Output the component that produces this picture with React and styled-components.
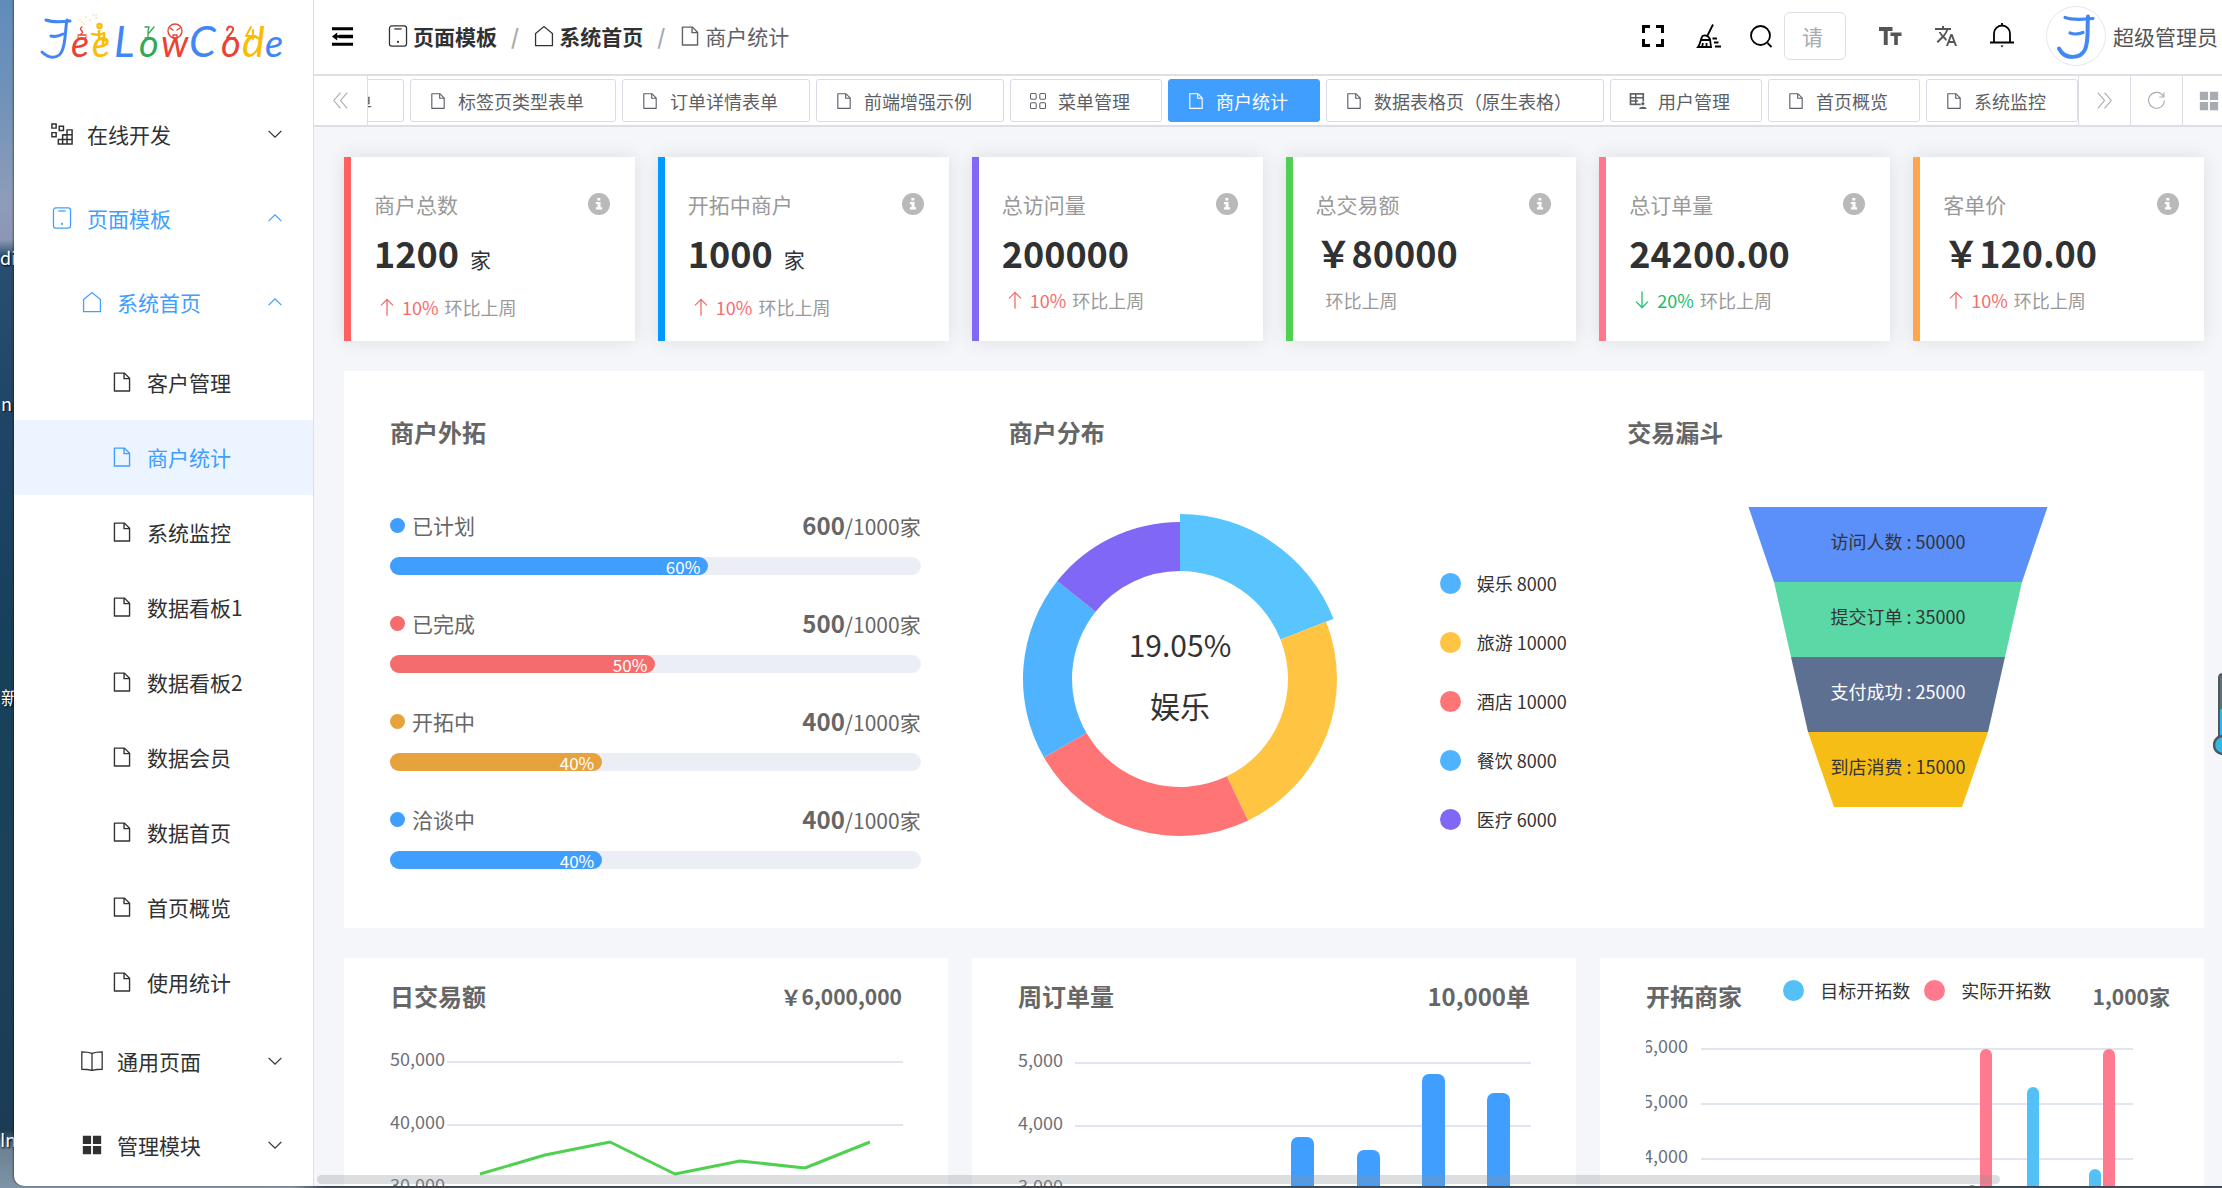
import React from "react";
import styled, { createGlobalStyle } from "styled-components";

const GlobalStyle = createGlobalStyle`
  *, *::before, *::after { box-sizing: border-box; }
  body { margin: 0; overflow: hidden; }
  body, button, input {
    font-family: "Noto Sans CJK SC", "Noto Sans", sans-serif;
    color: #333;
  }
  button { margin: 0; padding: 0; border: 0; background: none; cursor: pointer; }
  a { color: inherit; text-decoration: none; }
  h2, p, ul, ol, dl, dd { margin: 0; padding: 0; list-style: none; }
  svg { display: block; flex: none; }
`;

/* ---------- icons ---------- */

const Svg = ({ size = 22, children, width = 1.4, ...rest }) => (
  <svg width={size} height={size} viewBox="0 0 24 24" fill="none" stroke="currentColor" strokeWidth={width} aria-hidden="true" {...rest}>
    {children}
  </svg>
);

const icons = {
  doc: (
    <path
      d="M832 384H576V128H192v768h640zm-26.496-64L640 154.496V320zM160 64h480l256 256v608a32 32 0 0 1-32 32H160a32 32 0 0 1-32-32V96a32 32 0 0 1 32-32"
      transform="scale(0.0234375)"
      fill="currentColor"
      stroke="none"
    />
  ),
  phone: (
    <g>
      <rect x="2.7" y="1" width="18.6" height="22" rx="2.5" />
      <path d="M8 4.3h8" />
      <circle cx="12" cy="18.5" r="1.2" fill="currentColor" stroke="none" />
    </g>
  ),
  house: <path d="M2.8 22.4V9.2L12 1.6l9.2 7.6v13.2z" />,
  book: <path d="M12 3.6C8 2.2 4 2 .9 2v19c4 0 7 .2 11.1 1.2M12 3.6C16 2.2 20 2 23.1 2v19c-4 0-7 .2-11.1 1.2zV22.2" />,
  blocks: (
    <g fill="currentColor" stroke="none">
      <path d="M2 2h9v9H2zM13 2h9v9h-9zM2 13h9v9H2zM13 13h9v9h-9z" />
    </g>
  ),
  outlineBlocks: (
    <g>
      <rect x="2" y="2" width="7.6" height="7.6" rx="1.5" />
      <rect x="14.4" y="2" width="7.6" height="7.6" rx="1.5" />
      <rect x="2" y="14.4" width="7.6" height="7.6" rx="1.5" />
      <rect x="14.4" y="14.4" width="7.6" height="7.6" rx="1.5" />
    </g>
  ),
  grid: (
    <path
      strokeWidth="1.6"
      d="M1 1h4.6v4.6H1zM9 3.5h4.6v4.6H9zM1 10.5h4.6v4.6H1zM17.5 7.5h5.5V23H8v-5h4.7v-5h4.8zM17.5 12.7V23M12.7 18v5M12.7 12.7H23M12.7 18H23"
    />
  ),
  userTable: (
    <g>
      <rect x="2" y="2.5" width="17" height="14" strokeWidth="2.2" />
      <path d="M2 7.5h17M9 2.5v14M2 12h10" strokeWidth="2" />
      <circle cx="18.5" cy="15.5" r="2.6" fill="currentColor" stroke="#fff" strokeWidth="1" />
      <path d="M13.5 22.5c0-4 10-4 10 0z" fill="currentColor" stroke="none" />
    </g>
  ),
  down: <path d="M3.5 7.8 12 16.2l8.5-8.4" />,
  up: <path d="M3.5 16.2 12 7.8l8.5 8.4" />,
  collapse: (
    <g fill="currentColor" stroke="none">
      <path d="M1 2.4h22v3.2H1zM1 18.4h22v3.2H1zM8.5 10.3H23v3.4H8.5zM1 12l5.5-4.2v3h3v2.4h-3v3z" />
    </g>
  ),
  full: <path strokeWidth="3" d="M9 2.5H2.5V9M15 2.5h6.5V9M9 21.5H2.5V15M15 21.5h6.5V15" />,
  broom: (
    <g strokeWidth="1.8">
      <path d="M16 .5 10 12.5M5.5 12c3-1.500 6 0 7.5 3L14 23H1c2.5-3 2.5-8 4.5-11zM3.5 16h9.5M5 23l1-4M9.5 23v-4" />
      <path d="M15.5 14.5h4.5M17 18.5h4.5M18 22.5h6" />
    </g>
  ),
  search: (
    <g strokeWidth="1.8">
      <circle cx="11.5" cy="11.5" r="9.5" />
      <path d="m18.5 19 4 4" />
    </g>
  ),
  textSize: (
    <g fill="currentColor" stroke="none">
      <path d="M1 3h13.5v4H9.7v14H5.8V7H1z" />
      <path d="M12.5 8.5H23.5v3.4h-3.7V21h-3.6v-9.1h-3.7z" />
    </g>
  ),
  translate: (
    <path
      fill="currentColor"
      stroke="none"
      d="m12.870 15.070-2.540-2.510.030-.030A17.520 17.520 0 0 0 14.070 6H17V4h-7V2H8v2H1v2h11.170C11.500 7.920 10.440 9.750 9 11.350 8.070 10.320 7.300 9.190 6.690 8h-2c.730 1.630 1.730 3.170 2.980 4.560l-5.090 5.020L4 19l5-5 3.110 3.110zM18.500 10h-2L12 22h2l1.120-3h4.750L21 22h2zm-2.620 7 1.620-4.330L19.120 17z"
    />
  ),
  bell: (
    <g strokeWidth="1.8">
      <path d="M4 18.500V9.500a8 8 0 0 1 16 0v9M0 18.500h24M12 1.800V-1" />
      <path d="M10.500 21.500h3L12 23.500z" fill="currentColor" stroke="none" />
    </g>
  ),
  prev: <path d="M12 2 3.5 12 12 22M20.5 2 12 12l8.5 10" />,
  next: <path d="m12 2 8.5 10L12 22M3.5 2 12 12 3.5 22" />,
  reload: <path d="M20.5 6.5A10 10 0 1 0 22 12M21.5 1.5v6h-6" />,
  arrowUp: <path d="M12 23.5V2M4 9.8 12 1.8l8 8" />,
  arrowDown: <path d="M12 .5V22M4 14.2l8 8 8-8" />,
};

const Icon = ({ name, size, width }) => (
  <Svg size={size} width={width}>
    {icons[name]}
  </Svg>
);

const InfoIcon = () => (
  <svg width="22" height="22" viewBox="0 0 22 22" aria-hidden="true">
    <circle cx="11" cy="11" r="11" fill="#b9b9b9" />
    <path d="M9.3 5h3v2.6h-3zM7.900 9h4.6v5.2h1.6v2.2H7.900v-2.2h1.7v-3H7.900z" fill="#fff" />
  </svg>
);

const Logo = () => (
  <svg width="250" height="76" viewBox="38 0 250 76" role="img" aria-label="JeeLowCode">
    <g fill="none" strokeLinecap="round" strokeLinejoin="round">
      <path stroke="#4285f4" strokeWidth="3" d="M46 20c8 3 16 2 24 1M67 20c-2 10-1 22-5 31-3 7-12 9-20 1M51 36c4 1 8 0 12-2" />
      <g stroke="#ea4335" strokeWidth="1.4">
        <path d="M82 27c-5 3 4 4-1 7M78 35h8M78 37l1 2h6l1-2" />
        <circle cx="175" cy="31" r="7" />
        <path d="m170 28 3 2m7-2-3 2M173 35h4v3h-4z" />
        <path d="M227 30c1-5 7-4 6 0-1 3-4 5-6 8h8" strokeWidth="2" />
      </g>
      <g stroke="#34a853" strokeWidth="1.3">
        <path d="M145 27h4l-1 4v7m6-11-5 6M145 38h6" />
      </g>
      <g stroke="#fbbc05" strokeWidth="2.4">
        <circle cx="99.5" cy="26" r="2" />
        <path d="M99 31v8h4v6M92 34l7 1 5-2M104 33v8" />
        <path d="M251 27l-5 9h9M253 30v9" strokeWidth="2" />
        <path d="M80 20h.1M84 24h.1M86 17h.1M90 20h.1M93 15h.1M96 18h.1M82 22h.1M96 15h.1" strokeWidth="1.2" />
      </g>
    </g>
    <g fontFamily="Lato, sans-serif" fontStyle="italic" fontSize="38">
      <text x="71" y="57" fill="#ea4335">e</text>
      <text x="92" y="57" fill="#fbbc05">e</text>
      <text x="114" y="57" fill="#4285f4" fontSize="43">L</text>
      <text x="139" y="57" fill="#34a853">o</text>
      <text x="161" y="57" fill="#ea4335">w</text>
      <text x="189" y="57" fill="#4285f4" fontSize="43">C</text>
      <text x="221" y="57" fill="#ea4335">o</text>
      <text x="242" y="57" fill="#fbbc05" fontSize="43">d</text>
      <text x="265" y="57" fill="#4285f4">e</text>
    </g>
  </svg>
);

/* ---------- frame ---------- */

const Desktop = styled.div`
  display: flex;
  height: 100vh;
  padding: 0 0 2px 14px;
  position: relative;
  overflow: hidden;
  background:
    linear-gradient(90deg, #7f93a6 0, #8498a8 280px, #454f59 310px, #454f59 100%) 14px 100% / 100% 2px no-repeat,
    linear-gradient(180deg, #5f8cbb 0, #7393b9 110px, #8e9cba 200px, #8b97b3 240px, #2a4e70 256px, #1f4566 420px, #17405c 640px, #1b4259 900px, #1b3c55 1130px, #6d8296 1150px, #7f93a6 100%);
`;

const DesktopLabel = styled.span`
  position: absolute;
  left: ${(p) => p.$left}px;
  top: ${(p) => p.$top}px;
  color: #fff;
  font-size: 18px;
  line-height: 24px;
  white-space: nowrap;
  text-shadow: 1px 1px 2px #000;
`;

const Window = styled.div`
  flex: 1;
  min-width: 0;
  display: flex;
  position: relative;
  z-index: 1;
  overflow: hidden;
  background: #fff;
  border-bottom-left-radius: 10px;
  box-shadow: -1px 0 2px rgba(0, 0, 0, 0.4);
`;

/* ---------- sidebar ---------- */

const Sidebar = styled.aside`
  flex: none;
  width: 300px;
  border-right: 1px solid #dcdfe6;
`;

const Brand = styled.a`
  display: block;
  height: 93px;
  padding-left: 24px;
`;

const menuRow = `
  display: flex;
  align-items: center;
  width: 100%;
  font-size: 21px;
  text-align: left;
`;

const MenuGroup = styled.button`
  ${menuRow}
  height: 84px;
  padding: 0 29px 2px ${(p) => p.$level * 30}px;
  color: ${(p) => (p.$open ? "#409eff" : "#303133")};
`;

const MenuLink = styled.a`
  ${menuRow}
  height: 75px;
  padding: 0 0 2px 90px;
  color: ${(p) => (p.$active ? "#409eff" : "#303133")};
  background: ${(p) => (p.$active ? "#ebf4ff" : "none")};
`;

const MenuIcon = styled.span`
  display: flex;
  justify-content: center;
  width: 36px;
  margin-right: 7px;
`;

const MenuText = styled.span`
  flex: 1;
`;

const Group = ({ icon, level, open, children }) => (
  <MenuGroup type="button" $level={level} $open={open} aria-expanded={!!open}>
    <MenuIcon>
      <Icon name={icon} />
    </MenuIcon>
    <MenuText>{children}</MenuText>
    <Icon name={open ? "up" : "down"} size={18} width={1.7} />
  </MenuGroup>
);

const pages = ["客户管理", "商户统计", "系统监控", "数据看板1", "数据看板2", "数据会员", "数据首页", "首页概览", "使用统计"];

/* ---------- header ---------- */

const Main = styled.div`
  flex: 1;
  min-width: 0;
  margin-right: -12px;
  display: flex;
  flex-direction: column;
`;

const Header = styled.header`
  flex: none;
  display: flex;
  align-items: center;
  height: 76px;
  padding: 0 16px 2px 17px;
  border-bottom: 2px solid #dcdfe6;
`;

const Crumbs = styled.ol`
  display: flex;
  align-items: center;
  margin-left: 33px;
  font-size: 21px;
  line-height: 30px;
`;

const Crumb = styled.li`
  display: flex;
  align-items: center;
  color: ${(p) => (p.$current ? "#606266" : "#303133")};
  font-weight: ${(p) => (p.$current ? 400 : 700)};

  &:not(:first-child)::before {
    content: "/";
    margin: 0 14px;
    color: #a8abb2;
    font-weight: 700;
  }
`;

const CrumbLink = styled.a`
  display: flex;
  align-items: center;
  gap: 4px;
`;

const Tools = styled.div`
  flex: 1;
  display: flex;
  align-items: center;
  justify-content: flex-end;
  gap: 32px;
`;

const ToolPair = styled.div`
  display: flex;
  align-items: center;
  gap: 28px;
`;

const IconButton = styled.button`
  display: flex;
  color: ${(p) => (p.$muted ? "#555" : "#000")};

  svg {
    overflow: visible;
  }
`;

const SearchField = styled.label`
  display: flex;
  align-items: center;
  gap: 11px;
  color: #000;
`;

const SearchInput = styled.input`
  width: 62px;
  height: 48px;
  padding: 0 17px;
  border: 1px solid #dcdfe6;
  border-radius: 6px;
  background: #fff;
  font-size: 21px;
  outline: none;

  &::placeholder {
    color: #a8abb2;
  }
`;

const User = styled.button`
  display: flex;
  align-items: center;
  gap: 7px;
  color: #555;
  font-size: 21px;
  white-space: nowrap;
`;

const Avatar = () => (
  <svg width="60" height="60" viewBox="0 0 60 60" aria-hidden="true">
    <circle cx="30" cy="30" r="29.5" fill="#fff" stroke="#e6e6e6" />
    <g fill="none" stroke="#4189f2" strokeLinecap="round" strokeLinejoin="round">
      <path strokeWidth="3.2" d="M19 11.500c8 3 18 2 28 1M24 27c4 1.500 9 1 13-.5" />
      <path strokeWidth="4" d="M42 10.500c-1 12 1 24-3 33-4 9-20 11-26-1" />
    </g>
  </svg>
);

/* ---------- page tabs ---------- */

const TabBar = styled.nav`
  flex: none;
  display: flex;
  height: 51px;
  border-bottom: 2px solid #dcdfe6;
  background: #fff;
`;

const TabScroll = styled.div`
  flex: 1;
  min-width: 0;
  display: flex;
  justify-content: flex-end;
  align-items: center;
  gap: 6px;
  overflow: hidden;
`;

const Tab = styled.a`
  flex: none;
  display: flex;
  align-items: center;
  gap: 11px;
  height: 43px;
  padding: 0 31px 0 18px;
  border: 1px solid ${(p) => (p.$active ? "#409eff" : "#d8dce5")};
  border-radius: 3px;
  background: ${(p) => (p.$active ? "#409eff" : "#fff")};
  color: ${(p) => (p.$active ? "#fff" : "#5c5f66")};
  font-size: 18px;
  line-height: 26px;
  white-space: nowrap;
`;

const TabControl = styled.button`
  flex: none;
  display: flex;
  align-items: center;
  justify-content: center;
  width: ${(p) => (p.$start ? 54 : 52)}px;
  border: solid #dcdfe6;
  border-width: ${(p) => (p.$start ? "0 1px 0 0" : "0 0 0 1px")};
  color: #a8abb2;
`;

const tabs = [
  ["doc", "详情表单"],
  ["doc", "标签页类型表单"],
  ["doc", "订单详情表单"],
  ["doc", "前端增强示例"],
  ["outlineBlocks", "菜单管理"],
  ["doc", "商户统计"],
  ["doc", "数据表格页（原生表格）"],
  ["userTable", "用户管理"],
  ["doc", "首页概览"],
  ["doc", "系统监控"],
];

/* ---------- content ---------- */

const Content = styled.main`
  flex: 1;
  min-height: 0;
  display: flex;
  flex-direction: column;
  gap: 30px;
  padding: 30px 30px 0;
  overflow: hidden;
  background: #f5f6f9;
`;

const Cards = styled.section`
  flex: none;
  display: grid;
  grid-template-columns: repeat(6, minmax(0, 1fr));
  gap: 23px;
`;

const Card = styled.article`
  height: 184px;
  padding: 31px 25px 0 23px;
  border-left: 7px solid ${(p) => p.$color};
  background: #fff;
  box-shadow: 0 0 18px rgba(0, 0, 0, 0.1);
`;

const CardHead = styled.div`
  display: flex;
  align-items: center;
  justify-content: space-between;
  color: #999;
  font-size: 21px;
  line-height: 32px;
`;

const Value = styled.p`
  display: flex;
  align-items: baseline;
  gap: 11px;
  color: #303133;
  font-size: 36px;
  font-weight: 700;
  line-height: 65px;
`;

const Unit = styled.span`
  font-size: 21px;
  font-weight: 400;
`;

const Trend = styled.p`
  display: flex;
  align-items: center;
  padding-left: 4px;
  color: ${(p) => p.$color};
  font-size: 18px;
  line-height: 30px;
`;

const TrendText = styled.span`
  margin-left: 6px;
`;

const Period = styled(TrendText)`
  color: #999;
`;

const Panel = styled.section`
  flex: none;
  background: #fff;
`;

const Overview = styled(Panel)`
  display: grid;
  grid-template-columns: repeat(3, minmax(0, 1fr));
  height: 557px;
  padding: 0 2px;
`;

const Column = styled.div`
  min-width: 0;
  padding: 44px 44px 0;
`;

const Title = styled.h2`
  color: #666;
  font-size: 24px;
  font-weight: 700;
  line-height: 34px;
  white-space: nowrap;
`;

const ProgressList = styled.ul`
  display: grid;
  gap: 30px;
  padding-top: 58px;
`;

const ProgressHead = styled.div`
  display: flex;
  align-items: center;
  gap: 7px;
  height: 36px;
  margin-bottom: 14px;
  color: #666;
  font-size: 21px;
  line-height: 36px;
`;

const Dot = styled.span`
  flex: none;
  width: ${(p) => p.$size}px;
  height: ${(p) => p.$size}px;
  border-radius: 50%;
  background: ${(p) => p.$color};
`;

const Amount = styled.span`
  margin-left: auto;
`;

const AmountStrong = styled.strong`
  font-size: 24px;
`;

const Track = styled.div`
  height: 18px;
  border-radius: 9px;
  background: #ebeef5;
`;

const Fill = styled.div`
  height: 18px;
  padding-right: 8px;
  border-radius: 9px;
  background: ${(p) => p.$color};
  color: #fff;
  font-size: 17px;
  line-height: 20px;
  text-align: right;
`;

const DonutRow = styled.div`
  display: flex;
  align-items: center;
  gap: 95px;
  padding: 65px 0 0 6px;
`;

const Legend = styled.ul`
  display: flex;
  flex-direction: ${(p) => (p.$row ? "row" : "column")};
  gap: ${(p) => (p.$row ? 14 : 32)}px;
  margin-top: ${(p) => (p.$row ? 0 : 44)}px;
  padding-bottom: ${(p) => (p.$row ? 10 : 0)}px;
`;

const LegendItem = styled.li`
  display: flex;
  align-items: center;
  gap: 16px;
  font-size: 18px;
  line-height: 27px;
  white-space: nowrap;
`;

const FunnelBox = styled.div`
  display: flex;
  justify-content: center;
  padding: 58px 0 0 11px;
`;

const Charts = styled.div`
  flex: none;
  display: grid;
  grid-template-columns: repeat(3, minmax(0, 1fr));
  gap: 24px;
`;

const ChartPanel = styled(Panel)`
  height: 400px;
  padding: 20px ${(p) => (p.$wide ? 34 : 46)}px 0 46px;
`;

const ChartHead = styled.div`
  display: flex;
  align-items: center;
  justify-content: space-between;
  height: 35px;
`;

const Total = styled.strong`
  color: #666;
  font-size: ${(p) => p.$size}px;
  white-space: nowrap;
`;

const ScrollThumb = styled.div`
  position: absolute;
  left: 303px;
  right: 222px;
  bottom: 2px;
  height: 9px;
  border-radius: 5px;
  background: rgba(144, 147, 153, 0.3);
`;

const Thermometer = styled.div`
  position: absolute;
  right: 0;
  top: 672px;
`;

/* ---------- data ---------- */

const cards = [
  { color: "#ff6060", name: "商户总数", value: "1200", unit: "家", dir: "up", rate: "10%" },
  { color: "#0099ff", name: "开拓中商户", value: "1000", unit: "家", dir: "up", rate: "10%" },
  { color: "#8067f6", name: "总访问量", value: "200000", dir: "up", rate: "10%" },
  { color: "#50d050", name: "总交易额", value: "￥80000" },
  { color: "#ff788c", name: "总订单量", value: "24200.00", dir: "down", rate: "20%" },
  { color: "#ffa64d", name: "客单价", value: "￥120.00", dir: "up", rate: "10%" },
];

const progress = [
  { name: "已计划", done: 600, total: 1000, color: "#409eff" },
  { name: "已完成", done: 500, total: 1000, color: "#f56c6c" },
  { name: "开拓中", done: 400, total: 1000, color: "#e6a23c" },
  { name: "洽谈中", done: 400, total: 1000, color: "#409eff" },
];

const trades = [
  { name: "娱乐", value: 8000, color: "#4fb3ff", slice: "#58c5ff", outer: 165 },
  { name: "旅游", value: 10000, color: "#ffc442" },
  { name: "酒店", value: 10000, color: "#ff7575" },
  { name: "餐饮", value: 8000, color: "#4fb3ff" },
  { name: "医疗", value: 6000, color: "#8067f6" },
];

const funnel = [
  { label: "访问人数 : 50000", color: "#5b8ff9", top: 299, bottom: 248 },
  { label: "提交订单 : 35000", color: "#5ad8a6", top: 248, bottom: 214 },
  { label: "支付成功 : 25000", color: "#5d7092", top: 214, bottom: 180, light: true },
  { label: "到店消费 : 15000", color: "#f6bd16", top: 180, bottom: 128 },
];

const Donut = () => {
  const total = trades.reduce((sum, t) => sum + t.value, 0);
  const inner = 108;
  let angle = -Math.PI / 2;
  return (
    <svg width="330" height="330" viewBox="-165 -165 330 330">
      {trades.map((t) => {
        const start = angle;
        const end = (angle += (t.value / total) * Math.PI * 2);
        const outer = t.outer || 157;
        const at = (r, a) => `${(r * Math.cos(a)).toFixed(2)} ${(r * Math.sin(a)).toFixed(2)}`;
        return (
          <path
            key={t.name}
            fill={t.slice || t.color}
            d={`M${at(outer, start)}A${outer} ${outer} 0 0 1 ${at(outer, end)}L${at(inner, end)}A${inner} ${inner} 0 0 0 ${at(inner, start)}Z`}
          />
        );
      })}
      <g fontSize="30" fill="#333" textAnchor="middle">
        <text y="-22">19.05%</text>
        <text y="39">娱乐</text>
      </g>
    </svg>
  );
};

const LEVEL = 75;

const Funnel = () => (
  <svg width="300" height={LEVEL * 4} viewBox={`-150 0 300 ${LEVEL * 4}`}>
    {funnel.map((f, i) => (
      <g key={f.label}>
        <path
          fill={f.color}
          d={`M${-f.top / 2} ${i * LEVEL}H${f.top / 2}L${f.bottom / 2} ${(i + 1) * LEVEL}H${-f.bottom / 2}Z`}
        />
        <text y={i * LEVEL + 42} fontSize="18" textAnchor="middle" fill={f.light ? "#fff" : "#333"}>
          {f.label}
        </text>
      </g>
    ))}
  </svg>
);

const Axis = ({ labels, top, step, labelEnd, from, to }) => (
  <g>
    {labels.map((label, i) => (
      <g key={label}>
        <path d={`M${from} ${top + i * step}H${to}`} stroke="#e0e6f1" strokeWidth="2" />
        <text x={labelEnd} y={top + i * step + 4} fontSize="18" fill="#6e7079" textAnchor="end">
          {label}
        </text>
      </g>
    ))}
  </g>
);

const Bar = ({ x, y, width, color, r }) => (
  <rect x={x} y={y} width={width} height={360 - y} rx={r} fill={color} />
);

const chartProps = { width: 514, height: 345, viewBox: "0 0 514 345" };

const LineChart = () => (
  <svg {...chartProps}>
    <Axis labels={["50,000", "40,000", "30,000"]} top={49} step={63} labelEnd={55} from={57} to={513} />
    <polyline
      fill="none"
      stroke="#50d050"
      strokeWidth="3"
      strokeLinejoin="round"
      points="90,161 155,142 220,129 285,161 350,148 415,155 480,129"
    />
  </svg>
);

const WeekChart = () => (
  <svg {...chartProps}>
    <Axis labels={["5,000", "4,000", "3,000"]} top={50} step={63} labelEnd={45} from={57} to={513} />
    {[
      [273, 124],
      [339, 137],
      [404, 61],
      [469, 80],
    ].map(([x, y]) => (
      <Bar key={x} x={x} y={y} width={23} color="#409eff" r={7} />
    ))}
  </svg>
);

const MerchantChart = () => (
  <svg {...chartProps}>
    <Axis labels={["6,000", "5,000", "4,000"]} top={36} step={55} labelEnd={42} from={55} to={487} />
    <Bar x={320} y={172} width={12} color="#54c1f6" r={6} />
    <Bar x={334} y={36} width={12} color="#ff7a8e" r={6} />
    <Bar x={381} y={74} width={12} color="#54c1f6" r={6} />
    <Bar x={443} y={156} width={12} color="#54c1f6" r={6} />
    <Bar x={457} y={36} width={12} color="#ff7a8e" r={6} />
  </svg>
);

export default function App() {
  return (
    <Desktop>
      <GlobalStyle />
      <DesktopLabel $left={0} $top={245}>di</DesktopLabel>
      <DesktopLabel $left={1} $top={391}>n</DesktopLabel>
      <DesktopLabel $left={1} $top={685}>新</DesktopLabel>
      <DesktopLabel $left={0} $top={1127}>In</DesktopLabel>
      <Window>
        <Sidebar>
          <Brand href="#">
            <Logo />
          </Brand>
          <nav>
            <Group icon="grid" level={1}>在线开发</Group>
            <Group icon="phone" level={1} open>页面模板</Group>
            <Group icon="house" level={2} open>系统首页</Group>
            {pages.map((page) => (
              <MenuLink key={page} href="#" $active={page === "商户统计"}>
                <MenuIcon>
                  <Icon name="doc" />
                </MenuIcon>
                {page}
              </MenuLink>
            ))}
            <Group icon="book" level={2}>通用页面</Group>
            <Group icon="blocks" level={2}>管理模块</Group>
          </nav>
        </Sidebar>

        <Main>
          <Header>
            <IconButton type="button" aria-label="折叠菜单">
              <Icon name="collapse" size={23} />
            </IconButton>
            <Crumbs>
              <Crumb>
                <CrumbLink href="#"><Icon name="phone" />页面模板</CrumbLink>
              </Crumb>
              <Crumb>
                <CrumbLink href="#"><Icon name="house" />系统首页</CrumbLink>
              </Crumb>
              <Crumb $current>
                <CrumbLink href="#"><Icon name="doc" />商户统计</CrumbLink>
              </Crumb>
            </Crumbs>
            <Tools>
              <IconButton type="button" aria-label="全屏"><Icon name="full" size={24} /></IconButton>
              <ToolPair>
                <IconButton type="button" aria-label="清除缓存"><Icon name="broom" size={24} /></IconButton>
                <SearchField>
                  <Icon name="search" size={24} />
                  <SearchInput type="text" placeholder="请" aria-label="搜索" />
                </SearchField>
              </ToolPair>
              <IconButton type="button" $muted aria-label="字体大小"><Icon name="textSize" size={24} /></IconButton>
              <IconButton type="button" $muted aria-label="语言"><Icon name="translate" size={24} /></IconButton>
              <IconButton type="button" aria-label="消息"><Icon name="bell" size={24} /></IconButton>
              <User type="button">
                <Avatar />
                超级管理员
              </User>
            </Tools>
          </Header>

          <TabBar>
            <TabControl type="button" $start aria-label="向左"><Icon name="prev" size={19} /></TabControl>
            <TabScroll>
              {tabs.map(([icon, name]) => (
                <Tab key={name} href="#" $active={name === "商户统计"}>
                  <Icon name={icon} size={18} />
                  {name}
                </Tab>
              ))}
            </TabScroll>
            <TabControl type="button" aria-label="向右"><Icon name="next" size={19} /></TabControl>
            <TabControl type="button" aria-label="刷新"><Icon name="reload" size={19} /></TabControl>
            <TabControl type="button" aria-label="更多"><Icon name="blocks" size={22} /></TabControl>
          </TabBar>

          <Content>
            <Cards>
              {cards.map((c) => (
                <Card key={c.name} $color={c.color}>
                  <CardHead>
                    {c.name}
                    <InfoIcon />
                  </CardHead>
                  <Value>
                    {c.value}
                    {c.unit && <Unit>{c.unit}</Unit>}
                  </Value>
                  <Trend $color={c.dir === "down" ? "#19be6b" : "#f56c6c"}>
                    {c.dir && <Icon name={c.dir === "down" ? "arrowDown" : "arrowUp"} size={18} width={1.7} />}
                    {c.rate && <TrendText>{c.rate}</TrendText>}
                    <Period>环比上周</Period>
                  </Trend>
                </Card>
              ))}
            </Cards>

            <Overview>
              <Column>
                <Title>商户外拓</Title>
                <ProgressList>
                  {progress.map((p) => {
                    const percent = `${(p.done / p.total) * 100}%`;
                    return (
                      <li key={p.name}>
                        <ProgressHead>
                          <Dot $size={15} $color={p.color} />
                          {p.name}
                          <Amount>
                            <AmountStrong>{p.done}</AmountStrong>/{p.total}家
                          </Amount>
                        </ProgressHead>
                        <Track>
                          <Fill $color={p.color} style={{ width: percent }}>{percent}</Fill>
                        </Track>
                      </li>
                    );
                  })}
                </ProgressList>
              </Column>
              <Column>
                <Title>商户分布</Title>
                <DonutRow>
                  <Donut />
                  <Legend>
                    {trades.map((t) => (
                      <LegendItem key={t.name}>
                        <Dot $size={21} $color={t.color} />
                        {t.name} {t.value}
                      </LegendItem>
                    ))}
                  </Legend>
                </DonutRow>
              </Column>
              <Column>
                <Title>交易漏斗</Title>
                <FunnelBox>
                  <Funnel />
                </FunnelBox>
              </Column>
            </Overview>

            <Charts>
              <ChartPanel>
                <ChartHead>
                  <Title>日交易额</Title>
                  <Total $size={21}>￥6,000,000</Total>
                </ChartHead>
                <LineChart />
              </ChartPanel>
              <ChartPanel>
                <ChartHead>
                  <Title>周订单量</Title>
                  <Total $size={24}>10,000单</Total>
                </ChartHead>
                <WeekChart />
              </ChartPanel>
              <ChartPanel $wide>
                <ChartHead>
                  <Title>开拓商家</Title>
                  <Legend $row>
                    <LegendItem><Dot $size={21} $color="#54c1f6" />目标开拓数</LegendItem>
                    <LegendItem><Dot $size={21} $color="#ff7a8e" />实际开拓数</LegendItem>
                  </Legend>
                  <Total $size={21}>1,000家</Total>
                </ChartHead>
                <MerchantChart />
              </ChartPanel>
            </Charts>
          </Content>
        </Main>
        <ScrollThumb />
        <Thermometer>
          <svg width="9" height="84" viewBox="0 0 9 84" aria-hidden="true">
            <path d="M6 70V6q0-4 4-4v80A11 11 0 0 1 6 64z" fill="#5f7078" stroke="#4a5a60" strokeWidth="2" />
            <path d="M7 37h3v36H7z" fill="#35b6e6" />
            <circle cx="10" cy="73" r="9" fill="#35b6e6" stroke="#4a5a60" strokeWidth="2.5" />
          </svg>
        </Thermometer>
      </Window>
    </Desktop>
  );
}
